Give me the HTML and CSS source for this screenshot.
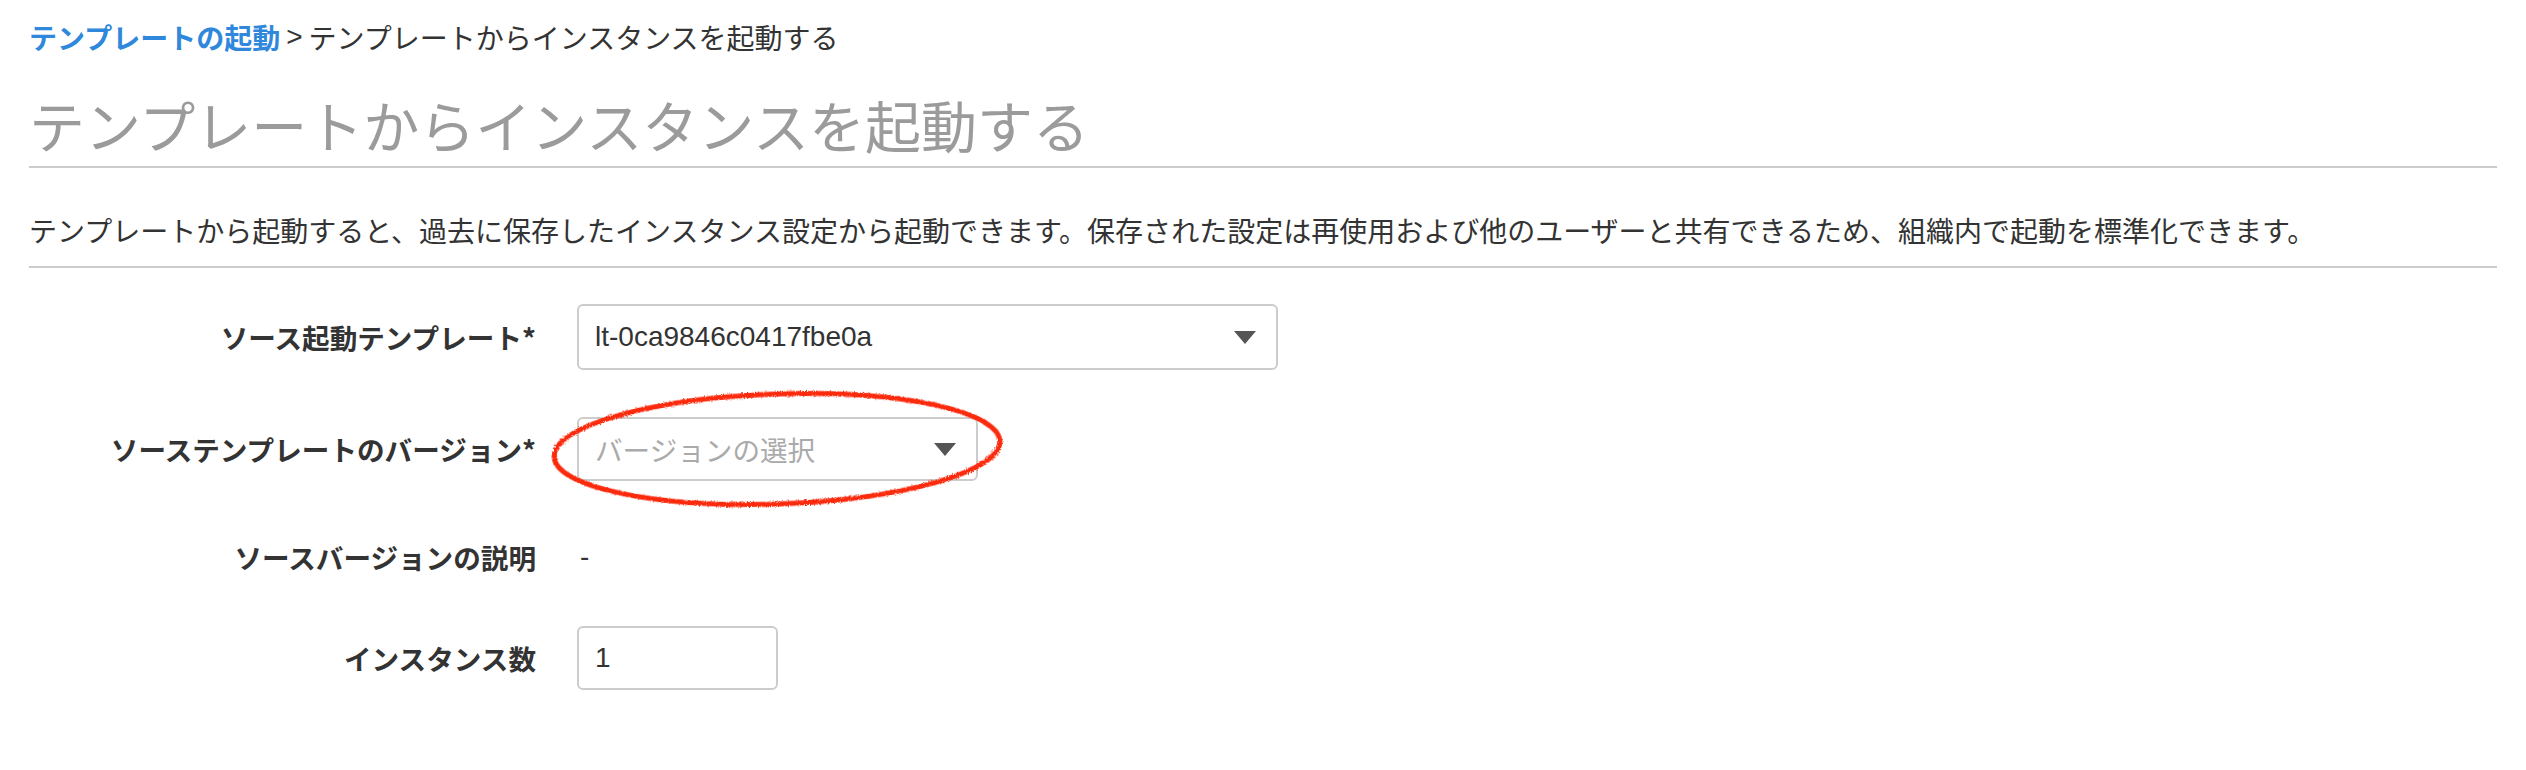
FILE: index.html
```html
<!DOCTYPE html>
<html lang="ja">
<head>
<meta charset="utf-8">
<title>テンプレートからインスタンスを起動する</title>
<link rel="stylesheet" href="styles.css">
</head>
<body>
<div class="page">
  <nav class="breadcrumb"><a class="crumb-link" href="#">テンプレートの起動</a><span class="crumb-sep">&gt;</span><span class="crumb-current">テンプレートからインスタンスを起動する</span></nav>
  <h1 class="title">テンプレートからインスタンスを起動する</h1>
  <p class="desc">テンプレートから起動すると、過去に保存したインスタンス設定から起動できます。保存された設定は再使用および他のユーザーと共有できるため、組織内で起動を標準化できます。</p>
  <div class="form">
    <div class="row">
      <div class="label">ソース起動テンプレート*</div>
      <div class="select wide"><span class="value">lt-0ca9846c0417fbe0a</span><span class="caret"></span></div>
    </div>
    <div class="row">
      <div class="label">ソーステンプレートのバージョン*</div>
      <div class="select narrow annotated"><span class="placeholder">バージョンの選択</span><span class="caret"></span>
        <svg class="circle-mark" viewBox="0 0 470 130" width="470" height="130" aria-hidden="true">
          <defs>
            <filter id="rough" x="-10%" y="-20%" width="120%" height="140%">
              <feTurbulence type="fractalNoise" baseFrequency="0.9" numOctaves="2" seed="3" result="n"/>
              <feDisplacementMap in="SourceGraphic" in2="n" scale="3.5"/>
            </filter>
          </defs>
          <ellipse cx="235" cy="65" rx="223" ry="55" transform="rotate(-2 235 65)" fill="none" stroke="#fb2a10" stroke-width="5" filter="url(#rough)"/>
        </svg>
      </div>
    </div>
    <div class="row text-row">
      <div class="label">ソースバージョンの説明</div>
      <div class="plain">-</div>
    </div>
    <div class="row">
      <div class="label">インスタンス数</div>
      <div class="input"><span class="value">1</span></div>
    </div>
  </div>
</div>
</body>
</html>
```
FILE: styles.css
```css
html, body {
  margin: 0;
  padding: 0;
  background: #ffffff;
}
body {
  font-family: "Noto Sans CJK JP", "Liberation Sans", sans-serif;
  color: #333333;
}
.page {
  padding: 0 29px;
}
.breadcrumb {
  font-size: 28px;
  line-height: 40px;
  padding-top: 17px;
  display: flex;
  align-items: center;
  white-space: nowrap;
}
.crumb-link {
  color: #2f88db;
  font-weight: 700;
  text-decoration: none;
}
.crumb-sep {
  margin: 0 6px 0 6px;
  font-family: "Liberation Sans", sans-serif;
  color: #333;
}
.crumb-current {
  color: #333;
}
.title {
  margin: 0;
  padding-top: 47px;
  font-size: 56px;
  font-weight: 400;
  line-height: 40px;
  color: #9b9b9b;
  padding-bottom: 22px;
  border-bottom: 2px solid #cccccc;
  white-space: nowrap;
}
.desc {
  margin: 0;
  font-size: 28px;
  line-height: 40px;
  padding: 42px 0 16px 0;
  border-bottom: 2px solid #cccccc;
  white-space: nowrap;
  color: #333;
}
.form {
  padding-top: 36px;
}
.row {
  display: flex;
  align-items: center;
  margin-bottom: 47px;
}
.row.text-row {
  height: 58px;
  margin-bottom: 40px;
}
.label {
  width: 507px;
  text-align: right;
  font-weight: 700;
  font-size: 27.6px;
  color: #333;
  margin-right: 41px;
  white-space: nowrap;
}
.select, .input {
  box-sizing: border-box;
  height: 66px;
  border: 2px solid #cccccc;
  border-radius: 6px;
  display: flex;
  align-items: center;
  padding: 0 20px 0 16px;
  background: #fff;
}
.select.wide {
  width: 701px;
  height: 66px;
}
.select.narrow {
  width: 401px;
  height: 64px;
}
.input {
  width: 201px;
  height: 64px;
}
.value {
  flex: 1;
  font-family: "Liberation Sans", sans-serif;
  font-size: 28px;
  color: #333;
}
.placeholder {
  flex: 1;
  font-size: 27.6px;
  color: #aaaaaa;
}
.caret {
  width: 0;
  height: 0;
  border-left: 11px solid transparent;
  border-right: 11px solid transparent;
  border-top: 13px solid #555555;
}
.plain {
  font-family: "Liberation Sans", sans-serif;
  font-size: 28px;
  color: #333;
  padding-left: 3px;
}
.annotated {
  position: relative;
}
.circle-mark {
  position: absolute;
  left: -37px;
  top: -35px;
  pointer-events: none;
}
```
